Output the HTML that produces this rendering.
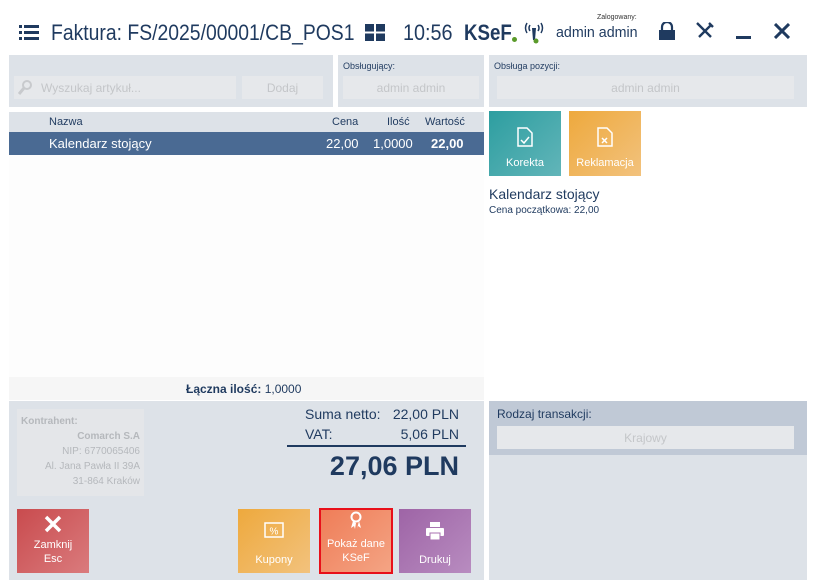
<!DOCTYPE html>
<html><head><meta charset="utf-8"><style>
*{margin:0;padding:0;box-sizing:border-box}
body{width:819px;height:588px;background:#fff;font-family:"Liberation Sans",sans-serif;position:relative;overflow:hidden;color:#1f3a5f}
.a{position:absolute;white-space:nowrap}
.panel{background:#dde2e8}
.inp{background:#e6e8eb;color:#c4c6c9;font-size:12px;display:flex;align-items:center;justify-content:center}
.tile{color:#fff;font-size:11px;text-align:center;display:flex;flex-direction:column;align-items:center;justify-content:flex-end;padding-bottom:7px}
</style></head><body>
<!-- header -->
<div class="a" style="left:19px;top:24px">
<svg width="20" height="16"><g fill="#1f3a5f"><rect x="0" y="1" width="3" height="3"/><rect x="5" y="1" width="15" height="3"/><rect x="0" y="7" width="3" height="3"/><rect x="5" y="7" width="15" height="3"/><rect x="0" y="13" width="3" height="3"/><rect x="5" y="13" width="15" height="3"/></g></svg></div>
<div class="a" style="left:51px;top:20px;font-size:22px;color:#1f3a5f;transform:scaleX(0.88);transform-origin:0 0">Faktura: FS/2025/00001/CB_POS1</div>
<div class="a" style="left:365px;top:24px"><svg width="20" height="17"><g fill="#1f3a5f"><rect x="0" y="0" width="9" height="7.5"/><rect x="11" y="0" width="9" height="7.5"/><rect x="0" y="9.5" width="9" height="7.5"/><rect x="11" y="9.5" width="9" height="7.5"/></g></svg></div>
<div class="a" style="left:403px;top:20px;font-size:22px;color:#1f3a5f;transform:scaleX(0.9);transform-origin:0 0">10:56</div>
<div class="a" style="left:464px;top:20px;font-size:22px;font-weight:bold;color:#1f3a5f;transform:scaleX(0.85);transform-origin:0 0">KSeF</div>
<div class="a" style="left:512px;top:37px;width:5px;height:5px;border-radius:50%;background:#5a9a2a"></div>
<div class="a" style="left:523px;top:20px"><svg width="22" height="24"><g fill="none" stroke="#1f3a5f" stroke-width="1.5"><path d="M4 3Q1 8 4 13M18 3Q21 8 18 13M7 5Q5 8 7 11M15 5Q17 8 15 11"/></g><path d="M9 8h4l-1 12h-2z" fill="#1f3a5f"/><circle cx="13" cy="21" r="2.5" fill="#5a9a2a"/></svg></div>
<div class="a" style="left:597px;top:14px;font-size:7px;color:#333">Zalogowany:</div>
<div class="a" style="left:556px;top:24px;font-size:15px;color:#1f3a5f;transform:scaleX(0.95);transform-origin:0 0">admin admin</div>
<div class="a" style="left:659px;top:22px"><svg width="16" height="18"><path d="M3 8V5a5 5 0 0 1 10 0v3" fill="none" stroke="#1f3a5f" stroke-width="2.2"/><rect x="0" y="8" width="16" height="10" fill="#1f3a5f"/></svg></div>
<div class="a" style="left:696px;top:22px"><svg width="18" height="18" stroke="#1f3a5f" stroke-width="2.4" fill="none"><path d="M3 3l12 12M15 3L3 15M1 1l4 4M13 1l4 4"/></svg></div>
<div class="a" style="left:736px;top:36px;width:15px;height:3px;background:#1f3a5f"></div>
<div class="a" style="left:774px;top:23px"><svg width="16" height="16" stroke="#1f3a5f" stroke-width="3"><path d="M1 1l14 14M15 1L1 15"/></svg></div>

<!-- top panels -->
<div class="a panel" style="left:9px;top:55px;width:324px;height:52px"></div>
<div class="a inp" style="left:14px;top:76px;width:222px;height:23px;justify-content:flex-start;padding-left:27px">Wyszukaj artykuł...</div>
<div class="a" style="left:18px;top:80px"><svg width="14" height="15"><circle cx="9" cy="5" r="4" fill="none" stroke="#c8cacd" stroke-width="2"/><path d="M6 8L1 14" stroke="#c8cacd" stroke-width="3"/></svg></div>
<div class="a inp" style="left:242px;top:76px;width:81px;height:23px">Dodaj</div>
<div class="a panel" style="left:338px;top:55px;width:146px;height:52px"></div>
<div class="a" style="left:343px;top:61px;font-size:9px;color:#1f3a5f">Obsługujący:</div>
<div class="a inp" style="left:343px;top:76px;width:136px;height:23px">admin admin</div>
<div class="a panel" style="left:489px;top:55px;width:318px;height:52px"></div>
<div class="a" style="left:494px;top:61px;font-size:9px;color:#1f3a5f">Obsługa pozycji:</div>
<div class="a inp" style="left:497px;top:76px;width:297px;height:23px">admin admin</div>

<!-- table -->
<div class="a" style="left:9px;top:112px;width:475px;height:20px;background:#dde2e8"></div>
<div class="a" style="left:49px;top:116px;font-size:11px">Nazwa</div>
<div class="a" style="left:332px;top:116px;font-size:11px">Cena</div>
<div class="a" style="left:387px;top:116px;font-size:11px">Ilość</div>
<div class="a" style="left:425px;top:116px;font-size:11px">Wartość</div>
<div class="a" style="left:9px;top:132px;width:475px;height:23px;background:#4a6a93"></div>
<div class="a" style="left:49px;top:136px;font-size:13px;color:#fff">Kalendarz stojący</div>
<div class="a" style="left:326px;top:136px;font-size:13px;color:#fff">22,00</div>
<div class="a" style="left:373px;top:136px;font-size:13px;color:#fff">1,0000</div>
<div class="a" style="left:431px;top:136px;font-size:13px;color:#fff;font-weight:bold">22,00</div>
<div class="a" style="left:9px;top:155px;width:475px;height:222px;background:#fdfdfd"></div>
<div class="a" style="left:9px;top:377px;width:475px;height:23px;background:#f6f6f6"></div>
<div class="a" style="left:186px;top:382px;font-size:12px;font-weight:bold;color:#1f3a5f">Łączna ilość: <span style="font-weight:normal">1,0000</span></div>

<!-- right tiles -->
<div class="a tile" style="left:489px;top:111px;width:72px;height:65px;background:linear-gradient(135deg,#2d9ea0,#62b5b9)">
<svg width="16" height="20" style="margin-bottom:10px" fill="none" stroke="#fff" stroke-width="1.5"><path d="M1 1h9l5 5v13H1z"/><path d="M4 13l3 3 5-6"/></svg>Korekta</div>
<div class="a tile" style="left:569px;top:111px;width:72px;height:65px;background:linear-gradient(135deg,#eea93d,#f2c27d)">
<svg width="16" height="20" style="margin-bottom:10px" fill="none" stroke="#fff" stroke-width="1.5"><path d="M1 1h9l5 5v13H1z"/><path d="M5 11l5 5M10 11l-5 5"/></svg>Reklamacja</div>
<div class="a" style="left:489px;top:186px;font-size:14px;color:#1f3a5f">Kalendarz stojący</div>
<div class="a" style="left:489px;top:205px;font-size:10px;color:#1f3a5f">Cena początkowa: 22,00</div>

<!-- bottom left -->
<div class="a panel" style="left:9px;top:401px;width:475px;height:179px"></div>
<div class="a" style="left:17px;top:409px;width:127px;height:87px;background:#e4e6e9;font-size:10px;color:#b5b8bc;text-align:right;padding:5px 4px 0 4px;line-height:15px">
<div style="text-align:left;font-weight:bold">Kontrahent:</div>
<div style="font-weight:bold">Comarch S.A</div>
<div>NIP: 6770065406</div><div>Al. Jana Pawła II 39A</div><div>31-864 Kraków</div></div>
<div class="a" style="left:305px;top:406px;font-size:14px;color:#1f3a5f">Suma netto:</div>
<div class="a" style="left:380px;top:406px;font-size:14px;width:79px;text-align:right">22,00 PLN</div>
<div class="a" style="left:305px;top:426px;font-size:14px">VAT:</div>
<div class="a" style="left:380px;top:426px;font-size:14px;width:79px;text-align:right">5,06 PLN</div>
<div class="a" style="left:287px;top:445px;width:179px;height:2px;background:#1f3a5f"></div>
<div class="a" style="left:280px;top:451px;width:179px;text-align:right;font-size:27px;font-weight:bold;color:#1f3a5f">27,06 PLN</div>

<div class="a tile" style="left:17px;top:509px;width:72px;height:64px;background:linear-gradient(135deg,#c94b4e,#da7b7d);line-height:14px">
<svg width="18" height="18" style="margin-bottom:5px" stroke="#fff" stroke-width="3.5"><path d="M2 2l14 14M16 2L2 16"/></svg>Zamknij<br>Esc</div>
<div class="a tile" style="left:238px;top:509px;width:72px;height:64px;background:linear-gradient(135deg,#eea93d,#f2c27d)">
<svg width="20" height="18" style="margin-bottom:14px"><rect x="1" y="1" width="18" height="14" fill="none" stroke="#fff" stroke-width="1.5"/><text x="10" y="12.5" font-size="10" fill="#fff" text-anchor="middle" font-family="Liberation Sans">%</text></svg>Kupony</div>
<div class="a tile" style="left:319px;top:508px;width:74px;height:66px;background:linear-gradient(135deg,#ef7d58,#f4a484);border:2px solid #e8101a;line-height:14px">
<svg width="14" height="20" style="margin-bottom:6px"><circle cx="7" cy="6" r="4.5" fill="none" stroke="#fff" stroke-width="2"/><path d="M4 10l-2 7 3-2 1 3 1-6M10 10l2 7-3-2-1 3" fill="#fff"/></svg>Pokaż dane<br>KSeF</div>
<div class="a tile" style="left:399px;top:509px;width:72px;height:64px;background:linear-gradient(135deg,#9e64a6,#b88cc0)">
<svg width="18" height="18" style="margin-bottom:14px" fill="#fff"><rect x="4" y="0" width="10" height="5"/><rect x="0" y="6" width="18" height="8" rx="1"/><rect x="4" y="11" width="10" height="7" fill="#fff" stroke="#a870b0"/></svg>Drukuj</div>

<!-- bottom right -->
<div class="a panel" style="left:489px;top:401px;width:318px;height:179px"></div>
<div class="a" style="left:489px;top:401px;width:318px;height:54px;background:#c0c9d6"></div>
<div class="a" style="left:497px;top:407px;font-size:12px;color:#1f3a5f">Rodzaj transakcji:</div>
<div class="a inp" style="left:497px;top:426px;width:297px;height:23px;font-size:12px">Krajowy</div>
</body></html>
